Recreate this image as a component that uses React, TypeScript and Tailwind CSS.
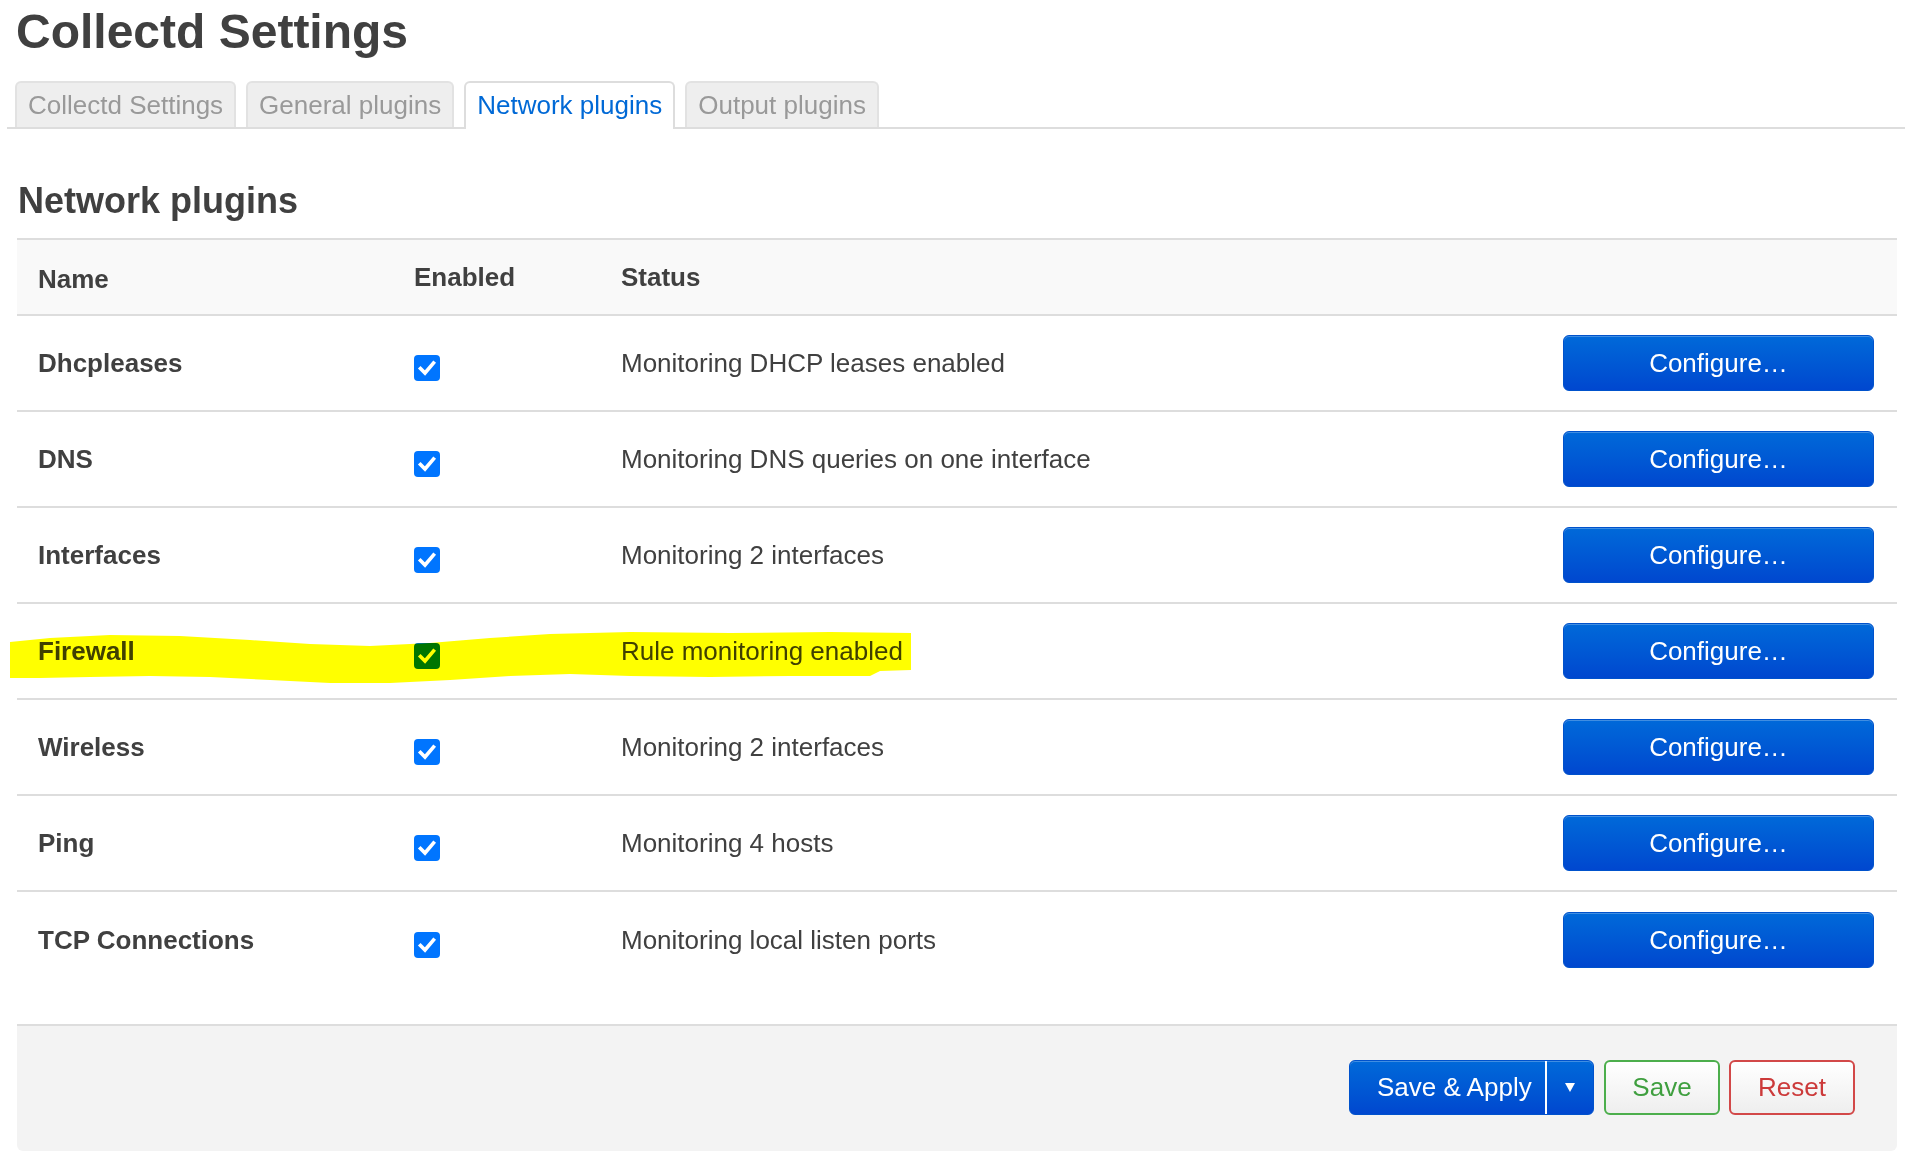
import React from "react";

// Plugin rows shown in the table
const plugins = [
  { name: "Dhcpleases", status: "Monitoring DHCP leases enabled" },
  { name: "DNS", status: "Monitoring DNS queries on one interface" },
  { name: "Interfaces", status: "Monitoring 2 interfaces" },
  { name: "Firewall", status: "Rule monitoring enabled", marked: true },
  { name: "Wireless", status: "Monitoring 2 interfaces" },
  { name: "Ping", status: "Monitoring 4 hosts" },
  { name: "TCP Connections", status: "Monitoring local listen ports" },
];

const tabs = ["Collectd Settings", "General plugins", "Network plugins", "Output plugins"];

function CheckBox() {
  return (
    <span className="mt-[9px] flex h-[26px] w-[26px] items-center justify-center rounded-[4px] bg-[#0075ff]">
      <svg width="26" height="26" viewBox="0 0 26 26">
        <path d="M6.5 13.5 L11 18 L19.5 8" fill="none" stroke="#fff" strokeWidth="3.6" strokeLinecap="square" strokeLinejoin="miter" />
      </svg>
    </span>
  );
}

// Hand drawn yellow marker over the Firewall row
function Marker() {
  return (
    <svg
      className="pointer-events-none absolute left-[-7px] top-0 z-10 mix-blend-multiply"
      width="905"
      height="94"
      viewBox="0 0 905 94"
    >
      <polygon
        fill="#ffff00"
        points="0,38 40,34 100,31 170,32 240,36 300,40 360,42 420,39 480,34 540,30 620,28 720,29 820,28 901,29 901,66 870,67 860,72 780,72 700,73 620,72 560,70 500,72 440,76 380,79 320,79 260,76 200,73 140,72 80,73 30,74 0,74"
      />
    </svg>
  );
}

function BlueButton({ children }: { children: React.ReactNode }) {
  return (
    <button className="flex h-[56px] w-[311px] items-center justify-center rounded-[6px] border border-[#0052cc] bg-linear-to-b from-[#0069d9] to-[#0047cf] text-[26px] text-white shadow-[inset_0_1px_0_rgba(255,255,255,0.25)]">
      {children}
    </button>
  );
}

export default function App() {
  return (
    <div className="min-h-screen bg-white text-[#404040]" style={{ fontFamily: '"Liberation Sans", Arial, sans-serif' }}>
      <h2 className="ml-[16px] mt-[8px] text-[48px] font-bold leading-[48px]">Collectd Settings</h2>

      {/* Tabs */}
      <div className="ml-[7px] mt-[25px] flex items-end gap-[10px] border-b-2 border-[#dddddd] pl-[8px]">
        {tabs.map((t) =>
          t === "Network plugins" ? (
            <div
              key={t}
              className="-mb-[2px] flex h-[48px] items-center rounded-t-[6px] border-2 border-b-0 border-[#dddddd] bg-white px-[11px] pb-[2px] text-[26px] leading-[26px] text-[#0069d6]"
            >
              {t}
            </div>
          ) : (
            <div
              key={t}
              className="flex h-[46px] items-center rounded-t-[6px] border-2 border-b-0 border-[#e2e2e2] bg-[#eeeeee] px-[11px] text-[26px] leading-[26px] text-[#999999]"
            >
              {t}
            </div>
          )
        )}
      </div>

      <div className="ml-[17px] mr-[8px]">
        <h3 className="mt-[54px] pl-[1px] text-[36px] font-bold leading-[36px]">Network plugins</h3>

        {/* Table */}
        <div className="mt-[19px] border-t-2 border-[#dddddd] text-[26px] leading-[26px]">
          <div className="grid h-[76px] grid-cols-[376px_207px_1fr_auto] items-center border-b-2 border-[#dddddd] bg-[#f9f9f9] font-bold">
            <div className="mt-[4px] pl-[21px]">Name</div>
            <div className="pl-[21px]">Enabled</div>
            <div className="pl-[21px]">Status</div>
            <div />
          </div>
          {plugins.map((p, i) => (
            <div
              key={p.name}
              className={
                "relative grid h-[96px] grid-cols-[376px_207px_1fr_auto] items-center " +
                (i < plugins.length - 1 ? "border-b-2 border-[#dddddd]" : "")
              }
            >
              <div className="pl-[21px] font-bold">{p.name}</div>
              <div className="pl-[21px]">
                <CheckBox />
              </div>
              <div className="pl-[21px]">{p.status}</div>
              <div className="pr-[23px]">
                <BlueButton>Configure…</BlueButton>
              </div>
              {p.marked && <Marker />}
            </div>
          ))}
        </div>

        {/* Footer actions */}
        <div className="mt-[36px] flex justify-end gap-[10px] rounded-b-[6px] border-t-2 border-[#dddddd] bg-[#f3f3f3] pb-[36px] pr-[42px] pt-[34px] text-[26px]">
          <div className="flex h-[55px] w-[245px] items-stretch overflow-hidden rounded-[6px] border border-[#0052cc] bg-linear-to-b from-[#0069d9] to-[#0047cf] text-white shadow-[inset_0_1px_0_rgba(255,255,255,0.25)]">
            <span className="flex flex-1 items-center pl-[27px]">Save &amp; Apply</span>
            <span className="w-[2px] bg-white" />
            <span className="flex w-[46px] items-center justify-center">
              <svg width="10" height="9" viewBox="0 0 10 9">
                <path d="M0 0 H10 L5 9 Z" fill="#fff" />
              </svg>
            </span>
          </div>
          <button className="flex h-[55px] w-[116px] items-center justify-center rounded-[6px] border-2 border-[#4cae4c] bg-linear-to-b from-white to-[#eeeeee] text-[#3f9f3f]">
            Save
          </button>
          <button className="-ml-[1px] flex h-[55px] w-[126px] items-center justify-center rounded-[6px] border-2 border-[#d24848] bg-linear-to-b from-white to-[#eeeeee] text-[#cc3a3a]">
            Reset
          </button>
        </div>
      </div>
    </div>
  );
}
